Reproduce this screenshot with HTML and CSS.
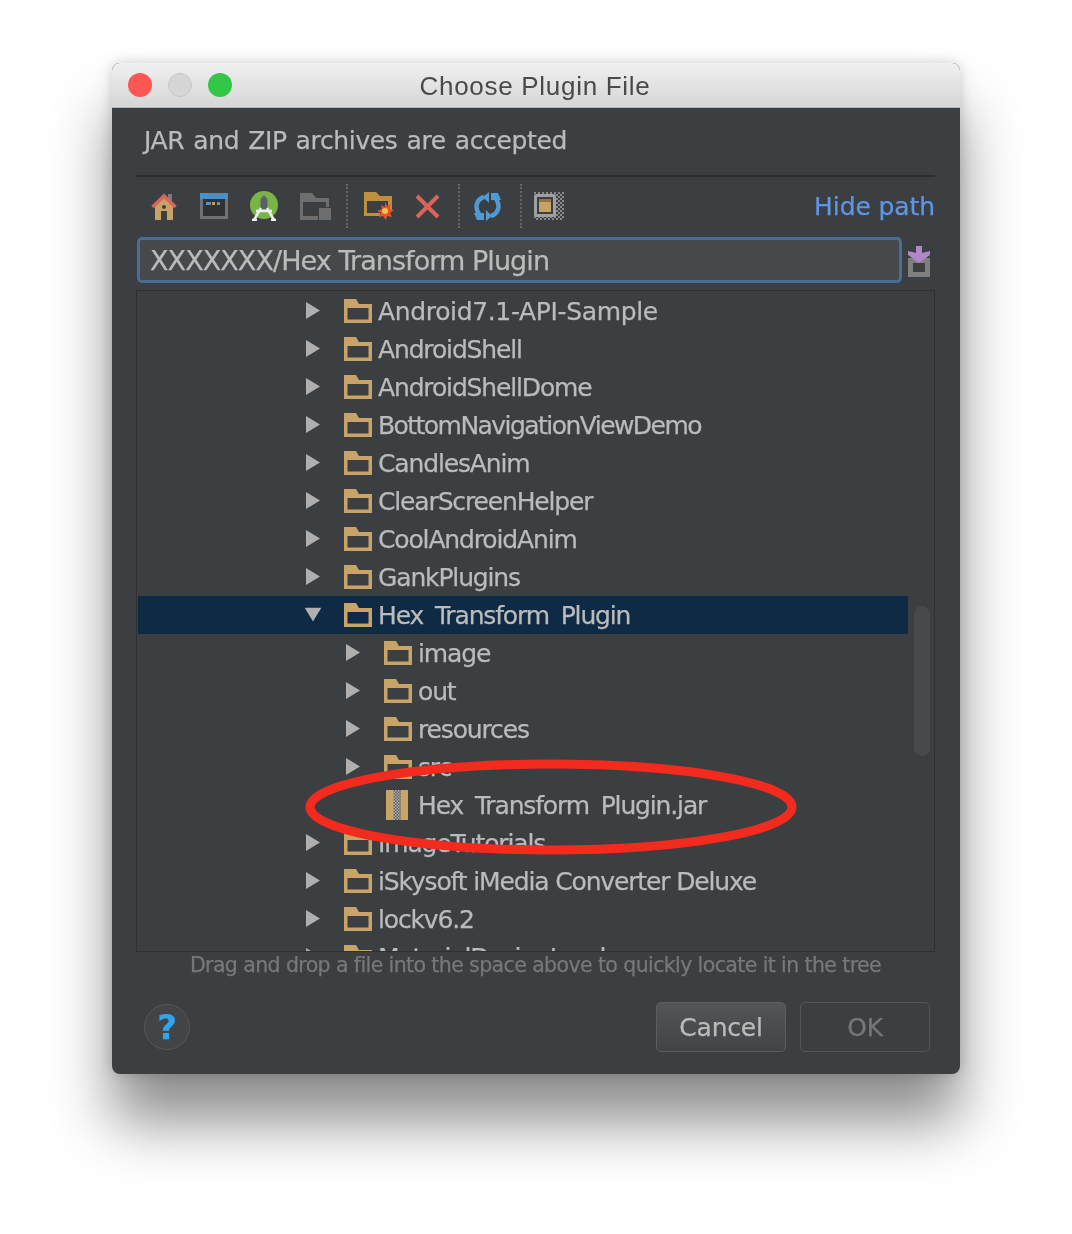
FILE: index.html
```html
<!DOCTYPE html>
<html lang="en">

<head>
    <meta charset="UTF-8">
    <meta name="viewport" content="width=device-width, initial-scale=1.0">
    <title>Choose Plugin File</title>
    <link rel="stylesheet" href="styles.css">
</head>

<body>

	<svg class="defs" width="0" height="0">
		<symbol id="folder" viewBox="0 0 28 24">
			<path fill="#c8a468" fill-rule="evenodd" d="M0 0H12L15 5H28V24H0ZM3.5 9V20.5H24.5V9Z"/>
		</symbol>
		<symbol id="arrow" viewBox="0 0 14 17">
			<path fill="#afafaf" d="M0 0L14 8.5L0 17Z"/>
		</symbol>
		<pattern id="checks" width="4" height="4" patternUnits="userSpaceOnUse">
			<rect width="4" height="4" fill="#3c3f41"/>
			<rect width="2" height="2" fill="#8a8a8a"/>
			<rect x="2" y="2" width="2" height="2" fill="#8a8a8a"/>
		</pattern>
		<pattern id="jar-dots" width="3" height="3" patternUnits="userSpaceOnUse">
			<rect width="3" height="3" fill="#55585a"/>
			<rect width="1.5" height="1.5" fill="#b5b5b5"/>
			<rect x="1.5" y="1.5" width="1.5" height="1.5" fill="#b5b5b5"/>
		</pattern>
	</svg>

	<div class="window">

		<header class="titlebar">
			<span class="light red"></span>
			<span class="light grey"></span>
			<span class="light green"></span>
			<h1>Choose Plugin File</h1>
		</header>

		<main class="content">

			<p class="description">JAR and ZIP archives are accepted</p>

			<div class="toolbar">
				<div class="tools">
					<svg class="tool home" width="26" height="29" viewBox="0 0 26 29">
						<path fill="#7b7b7b" d="M17 2h4v8h-4z"/>
						<path fill="#c8a266" d="M4 12L13 4L22 12V28H16V19H10V28H4Z"/>
						<path fill="none" stroke="#d9655a" stroke-width="3.5" d="M1.5 15L13 4L24.5 15"/>
						<circle cx="13" cy="15" r="2" fill="#3c3f41"/>
					</svg>
					<svg class="tool desktop" width="28" height="26" viewBox="0 0 28 26">
						<rect width="28" height="26" fill="#6f7274"/>
						<rect width="28" height="6" fill="#4c8fc7"/>
						<rect x="3" y="6" width="22" height="17" fill="#2f3133"/>
						<path fill="#5a8fc0" d="M6 9h5v3H6z"/>
						<path fill="#c39a50" d="M12 9h3v3h-3z"/>
						<path fill="#8a8a8a" d="M17 9h3v3h-3z"/>
					</svg>
					<svg class="tool android" width="28" height="30" viewBox="0 0 28 30">
						<circle cx="14" cy="14" r="14" fill="#78b545"/>
						<path fill="#5c6168" d="M14 4l3.500 4v10h-7V8z"/>
						<path fill="none" stroke="#eee" stroke-width="2.500" d="M4 29L11 17M24 29L17 17M6 20H22M2 29H7M21 29H26"/>
					</svg>
					<svg class="tool folder-grey" width="31" height="27" viewBox="0 0 31 27">
						<path fill="#6e6e6e" fill-rule="evenodd" d="M0 0H12L16 5H29V14H26V9H3V23H18V27H0Z"/>
						<rect x="19" y="15" width="12" height="12" fill="#6e6e6e"/>
					</svg>
					<span class="separator"></span>
					<svg class="tool folder-new" width="30" height="28" viewBox="0 0 30 28">
						<path fill="#bd8f3f" fill-rule="evenodd" d="M0 0H12L16 4H28V20H24V9H3V21H16V24H0Z"/>
						<path fill="#e8522f" d="M21 10l2 4 4-2-1 5 4 1-4 3 2 4-5-1-1 4-3-4-4 1 2-4-4-2 5-2-1-4 4 2z"/>
						<circle cx="21" cy="19" r="3" fill="#f4c542"/>
					</svg>
					<svg class="tool remove" width="25" height="25" viewBox="0 0 25 25">
						<path fill="none" stroke="#d9655a" stroke-width="4" d="M2 2L23 23M23 2L2 23"/>
					</svg>
					<span class="separator"></span>
					<svg class="tool refresh" width="29" height="29" viewBox="0 0 29 29">
						<path fill="none" stroke="#4f9ad4" stroke-width="4.500" d="M11 5C4 7 1 15 6 22M18 24C25 22 28 14 23 7"/>
						<path fill="#4f9ad4" d="M16 0V11L10 5ZM13 29V18L19 24ZM1 21H11V28H4ZM28 8H18V1H25Z"/>
					</svg>
					<span class="separator"></span>
					<svg class="tool preview" width="30" height="28" viewBox="0 0 30 28">
						<rect width="30" height="28" fill="url(#checks)"/>
						<rect x="1.500" y="3.500" width="19" height="20" rx="1" fill="#3c3f41" stroke="#a0a0a0" stroke-width="3"/>
						<rect x="5" y="7" width="12" height="13" fill="#c8a266"/>
						<rect x="5" y="7" width="12" height="3" fill="#8f7647"/>
					</svg>
				</div>
				<a class="hide-path">Hide path</a>
			</div>

			<div class="path-row">
				<div class="path-field">XXXXXXX/Hex Transform Plugin</div>
				<svg class="save-icon" width="22" height="31" viewBox="0 0 22 31">
					<path fill="#7f7f7f" fill-rule="evenodd" d="M0 12H22V31H0ZM5 17V26H17V17Z"/>
					<path fill="#b187c9" d="M8 0H14V7L22 5V9L11 17L0 9V5L8 7Z"/>
				</svg>
			</div>

			<div class="tree">
				<div class="row"><svg class="arrow"><use href="#arrow"/></svg><svg class="folder"><use href="#folder"/></svg><span class="wide">Android7.1-API-Sample</span></div>
				<div class="row"><svg class="arrow"><use href="#arrow"/></svg><svg class="folder"><use href="#folder"/></svg><span>AndroidShell</span></div>
				<div class="row"><svg class="arrow"><use href="#arrow"/></svg><svg class="folder"><use href="#folder"/></svg><span>AndroidShellDome</span></div>
				<div class="row"><svg class="arrow"><use href="#arrow"/></svg><svg class="folder"><use href="#folder"/></svg><span class="tight">BottomNavigationViewDemo</span></div>
				<div class="row"><svg class="arrow"><use href="#arrow"/></svg><svg class="folder"><use href="#folder"/></svg><span>CandlesAnim</span></div>
				<div class="row"><svg class="arrow"><use href="#arrow"/></svg><svg class="folder"><use href="#folder"/></svg><span>ClearScreenHelper</span></div>
				<div class="row"><svg class="arrow"><use href="#arrow"/></svg><svg class="folder"><use href="#folder"/></svg><span>CoolAndroidAnim</span></div>
				<div class="row"><svg class="arrow"><use href="#arrow"/></svg><svg class="folder"><use href="#folder"/></svg><span>GankPlugins</span></div>
				<div class="row selected"><svg class="arrow open"><use href="#arrow"/></svg><svg class="folder"><use href="#folder"/></svg><span>Hex Transform Plugin</span></div>
				<div class="row child"><svg class="arrow"><use href="#arrow"/></svg><svg class="folder"><use href="#folder"/></svg><span>image</span></div>
				<div class="row child"><svg class="arrow"><use href="#arrow"/></svg><svg class="folder"><use href="#folder"/></svg><span>out</span></div>
				<div class="row child"><svg class="arrow"><use href="#arrow"/></svg><svg class="folder"><use href="#folder"/></svg><span>resources</span></div>
				<div class="row child"><svg class="arrow"><use href="#arrow"/></svg><svg class="folder"><use href="#folder"/></svg><span>src</span></div>
				<div class="row child"><span class="arrow"></span><svg class="jar" width="22" height="30" viewBox="0 0 22 30"><rect width="8" height="30" fill="#c8a468"/><rect x="7.500" width="7" height="30" fill="url(#jar-dots)"/><rect x="14.500" width="7.500" height="30" fill="#c8a468"/></svg><span>Hex Transform Plugin.jar</span></div>
				<div class="row"><svg class="arrow"><use href="#arrow"/></svg><svg class="folder"><use href="#folder"/></svg><span>ImageTutorials</span></div>
				<div class="row"><svg class="arrow"><use href="#arrow"/></svg><svg class="folder"><use href="#folder"/></svg><span class="snug">iSkysoft iMedia Converter Deluxe</span></div>
				<div class="row"><svg class="arrow"><use href="#arrow"/></svg><svg class="folder"><use href="#folder"/></svg><span>lockv6.2</span></div>
				<div class="row"><svg class="arrow"><use href="#arrow"/></svg><svg class="folder"><use href="#folder"/></svg><span>MaterialDesignLoader</span></div>
				<div class="scrollbar"></div>
			</div>

			<p class="hint">Drag and drop a file into the space above to quickly locate it in the tree</p>

			<div class="actions">
				<button class="help">?</button>
				<button class="btn cancel">Cancel</button>
				<button class="btn ok">OK</button>
			</div>

		</main>
	</div>

	<svg class="marker" width="496" height="100" viewBox="0 0 496 100">
		<ellipse cx="246" cy="48" rx="241" ry="43" fill="none" stroke="#f32a1e" stroke-width="9"/>
	</svg>

</body>
</html>
```

FILE: styles.css
```css
html, body {
	margin: 0;
	padding: 0;
	background-color: #fff;
}

body {
	position: relative;
	height: 1234px;
	overflow: hidden;
	padding: 63px 0 0 112px;
	box-sizing: border-box;
	font-family: "DejaVu Sans", sans-serif;
}

.defs {
	position: absolute;
}

.window {
	width: 848px;
	height: 1011px;
	border-radius: 8px;
	overflow: hidden;
	box-shadow: 0 48px 60px rgba(0, 0, 0, 0.45), 0 0 14px rgba(0, 0, 0, 0.18);
	background-color: #3c3f41;
}

/* title bar */
.titlebar {
	display: flex;
	align-items: center;
	height: 45px;
	padding-left: 16px;
	gap: 16px;
	box-sizing: border-box;
	background: linear-gradient(#f0f0f0, #d6d6d6);
	border-bottom: 1px solid #b8b8b8;
}

.titlebar h1 {
	flex: 1;
	margin: 2px 0 0 -16px;
	padding-right: 122px;
	text-align: center;
	font-family: "Liberation Sans", sans-serif;
	font-weight: normal;
	font-size: 26px;
	letter-spacing: 0.7px;
	color: #4a4a4a;
	filter: blur(0.4px);
}

.light {
	width: 24px;
	height: 24px;
	border-radius: 50%;
	box-sizing: border-box;
}

.red {
	background-color: #fc5753;
}

.grey {
	background-color: #d6d6d6;
	border: 1px solid #c6c6c6;
}

.green {
	background-color: #33c748;
}

/* dialog body */
.content {
	padding: 0 25px 0 24px;
	filter: blur(0.45px);
	-webkit-text-stroke: 0.25px;
}

.description {
	margin: 0;
	height: 69px;
	padding: 16px 0 0 8px;
	box-sizing: border-box;
	border-bottom: 2px solid #2b2c2e;
	font-size: 25px;
	line-height: 34px;
	letter-spacing: -0.35px;
	word-spacing: 1.3px;
	color: #bbb;
}

.toolbar {
	display: flex;
	justify-content: space-between;
	align-items: center;
	height: 60px;
	padding-bottom: 2px;
	box-sizing: border-box;
}

.tools {
	display: flex;
	align-items: center;
	padding-left: 15px;
}

.tool {
	flex: none;
}

.home {
	margin-right: 23px;
}

.desktop {
	margin-right: 22px;
}

.android {
	margin-right: 22px;
}

.folder-grey {
	margin-right: -1px;
}

.folder-new {
	margin-left: 1px;
}

.separator {
	width: 0;
	height: 44px;
	border-left: 2px dotted #666;
	margin: 0 15px 0 16px;
}

.remove {
	margin: 0 2px 0 21px;
}

.refresh {
	margin: 0 2px 0 -2px;
}

.preview {
	margin-left: -3px;
}

.hide-path {
	font-size: 25px;
	letter-spacing: -0.1px;
	color: #5f95e6;
}

.path-row {
	display: flex;
	align-items: center;
	gap: 6px;
	height: 46px;
	padding-left: 1px;
}

.path-field {
	width: 765px;
	height: 46px;
	box-sizing: border-box;
	padding-left: 10px;
	border: 3px solid #4a6c99;
	border-radius: 5px;
	background-color: #45494a;
	font-size: 27px;
	line-height: 42px;
	letter-spacing: -0.93px;
	color: #bbb;
}

.save-icon {
	flex: none;
	margin-top: 3px;
}

/* file tree */
.tree {
	position: relative;
	height: 662px;
	margin-top: 7px;
	box-sizing: border-box;
	padding-top: 1px;
	overflow: hidden;
	border: 1px solid #2e3032;
}

.row {
	display: flex;
	align-items: center;
	height: 38px;
	width: 770px;
	margin-left: 1px;
	padding-left: 168px;
	box-sizing: border-box;
	font-size: 25px;
	letter-spacing: -1.15px;
	word-spacing: 5px;
	color: #bbb;
	white-space: nowrap;
}

.row.child {
	padding-left: 208px;
}

.wide {
	letter-spacing: -0.35px;
}

.tight {
	letter-spacing: -1.55px;
}

.snug {
	word-spacing: 0;
}

.selected {
	background-color: #0f2a45;
}

.arrow {
	flex: none;
	width: 14px;
	height: 17px;
	margin: -2px 24px 0 0;
}

.arrow.open {
	transform: rotate(90deg);
}

.folder {
	flex: none;
	width: 28px;
	height: 24px;
	margin: -1px 6px 0 0;
}

.jar {
	flex: none;
	margin-right: 10px;
	margin-left: 2px;
}

.scrollbar {
	position: absolute;
	right: 4px;
	top: 315px;
	width: 16px;
	height: 150px;
	border-radius: 8px;
	background-color: #47494b;
}

.hint {
	margin: 0;
	height: 27px;
	text-align: center;
	font-size: 20.5px;
	line-height: 27px;
	letter-spacing: -0.6px;
	color: #787878;
}

.actions {
	display: flex;
	align-items: center;
	gap: 14px;
	height: 50px;
	margin-top: 23px;
	padding: 0 5px 0 8px;
}

button {
	font-family: inherit;
	cursor: default;
}

.help {
	width: 46px;
	height: 46px;
	margin-right: auto;
	padding: 0;
	border: 1px solid #56595b;
	border-radius: 50%;
	background-color: #424547;
	font-size: 34px;
	font-weight: bold;
	line-height: 44px;
	color: #33a3ee;
}

.btn {
	width: 130px;
	height: 50px;
	padding: 0;
	border-radius: 5px;
	font-size: 25px;
	letter-spacing: -0.2px;
}

.cancel {
	border: 1px solid #5c5f60;
	background: linear-gradient(#535657, #414445);
	color: #bbb;
}

.ok {
	border: 1px solid #555;
	background: transparent;
	color: #777;
}

.marker {
	position: absolute;
	left: 305px;
	top: 759px;
	filter: blur(0.4px);
}
```
